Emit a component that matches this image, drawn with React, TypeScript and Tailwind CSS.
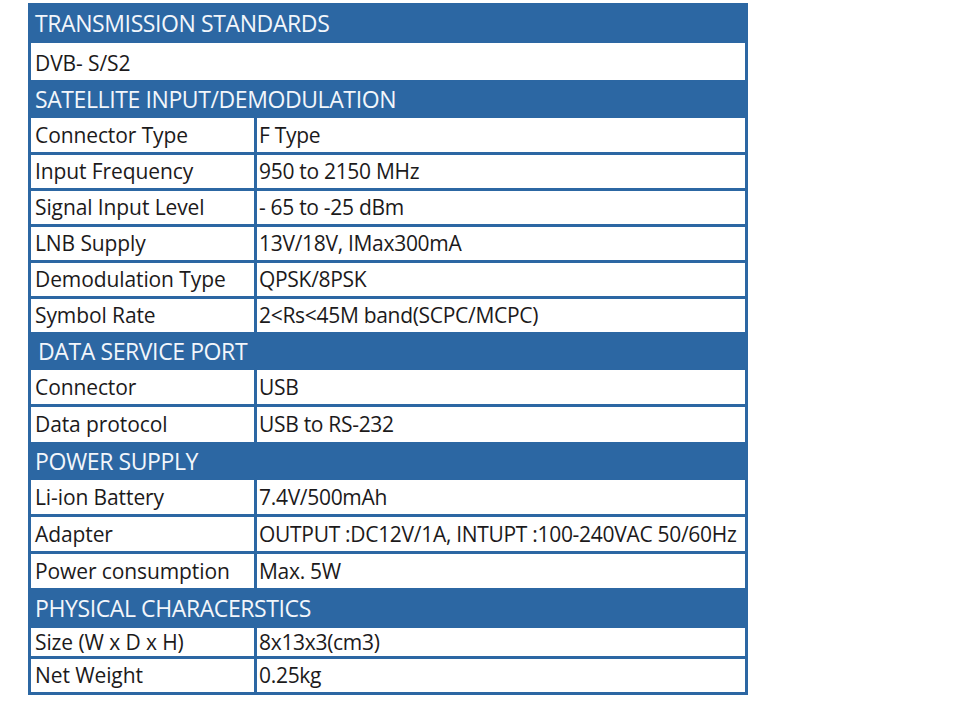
import React from 'react';

type Row = { label: string; value: string; h: number };
type Section = { title: string; indent?: boolean; h: number; rows: Row[] };

const sections: Section[] = [
  {
    title: 'SATELLITE INPUT/DEMODULATION',
    h: 32,
    rows: [
      { label: 'Connector Type', value: 'F Type', h: 34 },
      { label: 'Input Frequency', value: '950 to 2150 MHz', h: 33 },
      { label: 'Signal Input Level', value: '- 65 to -25 dBm', h: 33 },
      { label: 'LNB Supply', value: '13V/18V, IMax300mA', h: 33 },
      { label: 'Demodulation Type', value: 'QPSK/8PSK', h: 33 },
      { label: 'Symbol Rate', value: '2<Rs<45M band(SCPC/MCPC)', h: 33 },
    ],
  },
  {
    title: 'DATA SERVICE PORT',
    indent: true,
    h: 32,
    rows: [
      { label: 'Connector', value: 'USB', h: 34 },
      { label: 'Data protocol', value: 'USB to RS-232', h: 35 },
    ],
  },
  {
    title: 'POWER SUPPLY',
    h: 32,
    rows: [
      { label: 'Li-ion Battery', value: '7.4V/500mAh', h: 34 },
      { label: 'Adapter', value: 'OUTPUT :DC12V/1A, INTUPT :100-240VAC 50/60Hz', h: 34 },
      { label: 'Power consumption', value: 'Max. 5W', h: 34 },
    ],
  },
  {
    title: 'PHYSICAL CHARACERSTICS',
    h: 34,
    rows: [
      { label: 'Size (W x D x H)', value: '8x13x3(cm3)', h: 28 },
      { label: 'Net Weight', value: '0.25kg', h: 33 },
    ],
  },
];

const Header: React.FC<{ title: string; h: number; indent?: boolean }> = ({ title, h, indent }) => (
  <div
    className={`flex items-center text-[23px] tracking-[-0.4px] text-[#f2f6fb] bg-[#2c67a3] ${indent ? 'pl-[7px]' : 'pl-[4px]'}`}
    style={{ height: h }}
  >
    {title}
  </div>
);

const SpecRow: React.FC<{ row: Row }> = ({ row }) => (
  <div className="grid grid-cols-[223px_1fr] gap-[3px]" style={{ height: row.h }}>
    <div className="bg-white flex items-center pl-[4px] whitespace-nowrap tracking-[-0.1px]">{row.label}</div>
    <div className="bg-white flex items-center pl-[2px] whitespace-nowrap tracking-[-0.3px]">{row.value}</div>
  </div>
);

export default function App() {
  return (
    <div className="w-[955px] h-[715px] bg-white pt-[3px] pl-[28px]">
      <div
        className="w-[720px] bg-[#2c67a3] p-[3px] flex flex-col gap-[3px] text-[21px] text-[#1c1a1b] leading-none"
        style={{ fontFamily: '"Open Sans", "Liberation Sans", sans-serif' }}
      >
        <Header title="TRANSMISSION STANDARDS" h={34} />
        <div className="bg-white h-[37px] flex items-center pl-[4px] pt-[3px] tracking-[-0.1px]">DVB- S/S2</div>
        {sections.map((s) => (
          <React.Fragment key={s.title}>
            <Header title={s.title} h={s.h} indent={s.indent} />
            {s.rows.map((r) => (
              <SpecRow key={r.label} row={r} />
            ))}
          </React.Fragment>
        ))}
      </div>
    </div>
  );
}
